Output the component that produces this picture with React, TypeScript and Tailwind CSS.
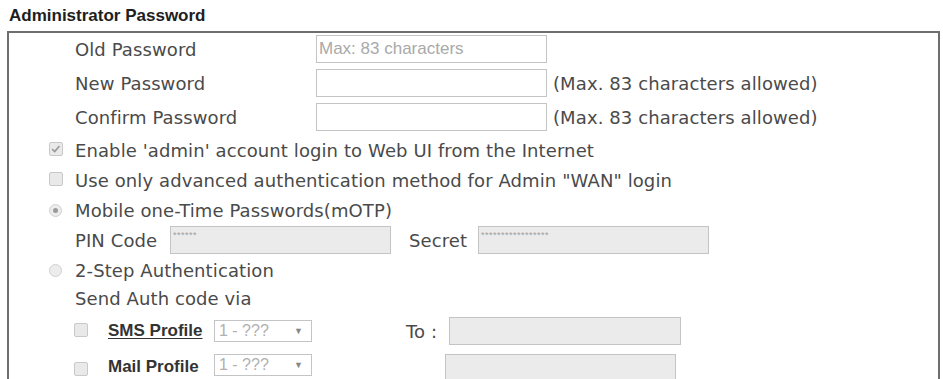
import React from 'react'

const label = "font-['DejaVu_Sans',Verdana,sans-serif] text-[18px] tracking-[0.1px] text-[#4a4a4a]"
const arial = "font-['Liberation_Sans',Arial,sans-serif]"

const Check = ({ checked }: { checked?: boolean }) => (
  <span className="relative inline-block h-[14px] w-[14px] shrink-0 rounded-[2px] border border-[#c9c9c9] bg-[#e9e9e9]">
    {checked && (
      <svg viewBox="0 0 14 14" className="absolute left-0 top-0 h-[12px] w-[12px]">
        <path d="M2.5 7.2 L5.5 10 L11 3.5" fill="none" stroke="#9a9a9a" strokeWidth="2" />
      </svg>
    )}
  </span>
)

const Radio = ({ checked }: { checked?: boolean }) => (
  <span className="flex h-[13px] w-[13px] shrink-0 items-center justify-center rounded-full border border-[#d0d0d0] bg-[#ececec]">
    {checked && <span className="h-[5px] w-[5px] rounded-full bg-[#9a9a9a]" />}
  </span>
)

const TextBox = ({ w, disabled, placeholder, dots }: { w: string; disabled?: boolean; placeholder?: string; dots?: string }) => (
  <div
    className={
      w +
      ' flex h-[28px] items-center border border-[#c4c4c4] px-[2px] ' +
      (disabled ? 'bg-[#ebebeb]' : 'bg-white')
    }
  >
    {placeholder && <span className={arial + ' text-[17px] text-[#a9a9a9]'}>{placeholder}</span>}
    {dots && <span className={arial + ' -mt-[8px] text-[9px] tracking-[0.5px] text-[#a0a0a0]'}>{dots}</span>}
  </div>
)

const Select = () => (
  <div className="flex h-[22px] w-[98px] items-center justify-between border border-[#c4c4c4] bg-white pl-[4px] pr-[8px]">
    <span className={arial + ' text-[16px] text-[#b0b0b0]'}>1 - ???</span>
    <span className="text-[9px] text-[#888]">▼</span>
  </div>
)

const PwRow = ({ name, placeholder, hint }: { name: string; placeholder?: string; hint?: boolean }) => (
  <div className="flex h-[28px] items-center">
    <div className={label + ' w-[241px]'}>{name}</div>
    <TextBox w="w-[231px]" placeholder={placeholder} />
    {hint && <div className={label + ' ml-[6px]'}>(Max. 83 characters allowed)</div>}
  </div>
)

export default function App() {
  return (
    <div className="h-[379px] w-[943px] overflow-hidden bg-white">
      <div className={arial + ' h-[31px] pl-[9px] pt-[6px] text-[17px] font-bold leading-[20px] text-[#1e1e1e]'}>
        Administrator Password
      </div>
      <div className="ml-[7px] h-[348px] w-[933px] border-l-2 border-r-2 border-t-2 border-[#6e6e6e] pl-[66px]">
        <div className="flex flex-col gap-[6px] pt-[2px]">
          <PwRow name="Old Password" placeholder="Max: 83 characters" />
          <PwRow name="New Password" hint />
          <PwRow name="Confirm Password" hint />
        </div>

        <div className="mt-[4px] flex h-[30px] items-center">
          <div className="-ml-[26px] mr-[12px]">
            <Check checked />
          </div>
          <span className={label}>Enable 'admin' account login to Web UI from the Internet</span>
        </div>
        <div className="flex h-[30px] items-center">
          <div className="-ml-[26px] mr-[12px]">
            <Check />
          </div>
          <span className={label}>Use only advanced authentication method for Admin "WAN" login</span>
        </div>
        <div className="flex h-[30px] items-center">
          <div className="-ml-[26px] mr-[13px]">
            <Radio checked />
          </div>
          <span className={label}>Mobile one-Time Passwords(mOTP)</span>
        </div>
        <div className="flex h-[30px] items-center">
          <span className={label + ' w-[95px]'}>PIN Code</span>
          <TextBox w="w-[221px]" disabled dots="******" />
          <span className={label + ' ml-[18px] w-[69px]'}>Secret</span>
          <TextBox w="w-[231px]" disabled dots="*****************" />
        </div>
        <div className="flex h-[30px] items-center">
          <div className="-ml-[26px] mr-[13px]">
            <Radio />
          </div>
          <span className={label}>2-Step Authentication</span>
        </div>
        <div className="flex h-[27px] items-center">
          <span className={label}>Send Auth code via</span>
        </div>
        <div className="mt-[4px] flex h-[30px] items-center">
          <div className="-ml-[1px] w-[34px]">
            <Check />
          </div>
          <span className={arial + ' w-[106px] text-[17px] font-bold text-[#333] underline underline-offset-2'}>
            SMS Profile
          </span>
          <Select />
          <span className={label + ' ml-[94px] w-[43px]'}>To :</span>
          <TextBox w="w-[232px]" disabled />
        </div>
        <div className="mt-[4px] flex h-[30px] items-start pt-[4px]">
          <div className="-ml-[1px] mt-[4px] w-[34px]">
            <Check />
          </div>
          <span className={arial + ' w-[106px] text-[17px] font-bold text-[#333]'}>Mail Profile</span>
          <Select />
          <div className="ml-[133px]">
            <TextBox w="w-[231px]" disabled />
          </div>
        </div>
      </div>
    </div>
  )
}
